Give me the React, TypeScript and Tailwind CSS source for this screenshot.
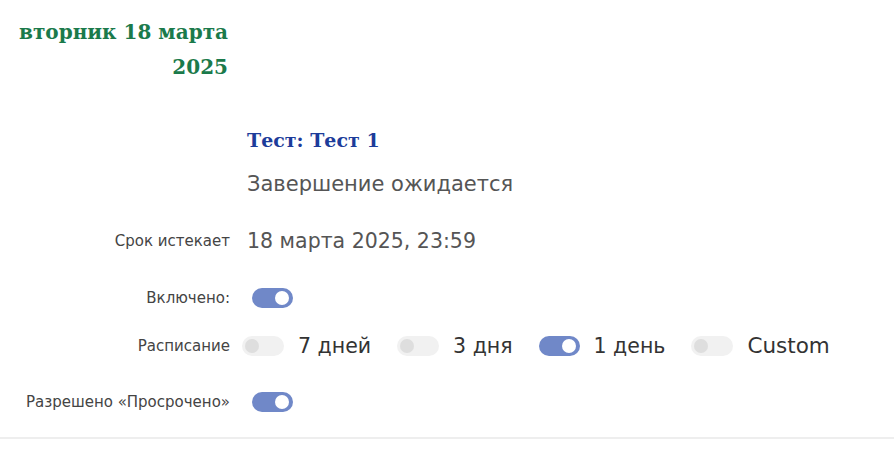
import React from 'react';

function Toggle({ on }: { on?: boolean }) {
    return on ? (
        <span className="inline-flex h-[20px] w-[41px] shrink-0 items-center justify-end rounded-full bg-[#7088c8] pr-[4px]">
            <span className="h-[14px] w-[14px] rounded-full bg-white" />
        </span>
    ) : (
        <span className="inline-flex h-[20px] w-[42px] shrink-0 items-center rounded-full bg-[#f1f1f1] pl-[3px]">
            <span className="h-[14px] w-[14px] rounded-full bg-[#dedede]" />
        </span>
    );
}

const label = 'flex h-[28px] items-center justify-end text-[15px] text-[#444]';
const value = 'flex h-[28px] items-center text-[20.5px] text-[#555]';

function Option({ on, text, className }: { on?: boolean; text: string; className: string }) {
    return (
        <div className={`flex items-center gap-[14px] ${className}`}>
            <Toggle on={on} />
            <span>{text}</span>
        </div>
    );
}

export default function App() {
    return (
        <div className="min-h-screen bg-white font-['DejaVu_Sans',sans-serif]">
            <div className="grid grid-cols-[230px_1fr] gap-x-[17px] pt-[15px]">
                <h1 className="pr-[2px] text-right font-['DejaVu_Serif',serif] text-[20px] leading-[35px] font-bold text-[#1b7a4b]">
                    вторник 18 марта
                    <br />
                    2025
                </h1>
                <div />

                <div />
                <div className="pt-[43px]">
                    <h2 className="font-['DejaVu_Serif',serif] text-[19px] leading-[24px] font-bold text-[#1d3c9a]">
                        Тест: Тест 1
                    </h2>
                    <p className="mt-[19px] flex h-[28px] items-center text-[21px] text-[#555]">
                        Завершение ожидается
                    </p>
                </div>

                <div className={`${label} mt-[28px]`}>Срок истекает</div>
                <div className={`${value} mt-[28px]`}>18 марта 2025, 23:59</div>

                <div className={`${label} mt-[29px]`}>Включено:</div>
                <div className="mt-[29px] flex h-[28px] items-center pl-[5px]">
                    <Toggle on />
                </div>

                <div className={`${label} mt-[20px]`}>Расписание</div>
                <div className="mt-[20px] flex h-[28px] items-center text-[20.5px] text-[#333]">
                    <Option className="-ml-[5px]" text="7 дней" />
                    <Option className="ml-[26px]" text="3 дня" />
                    <Option className="ml-[26px]" on text="1 день" />
                    <Option className="ml-[26px] text-[21.5px]" text="Custom" />
                </div>

                <div className={`${label} mt-[28px]`}>Разрешено «Просрочено»</div>
                <div className="mt-[28px] flex h-[28px] items-center pl-[5px]">
                    <Toggle on />
                </div>
            </div>
            <div className="mt-[21px] h-[2px] bg-[#eeeeee]" />
        </div>
    );
}
